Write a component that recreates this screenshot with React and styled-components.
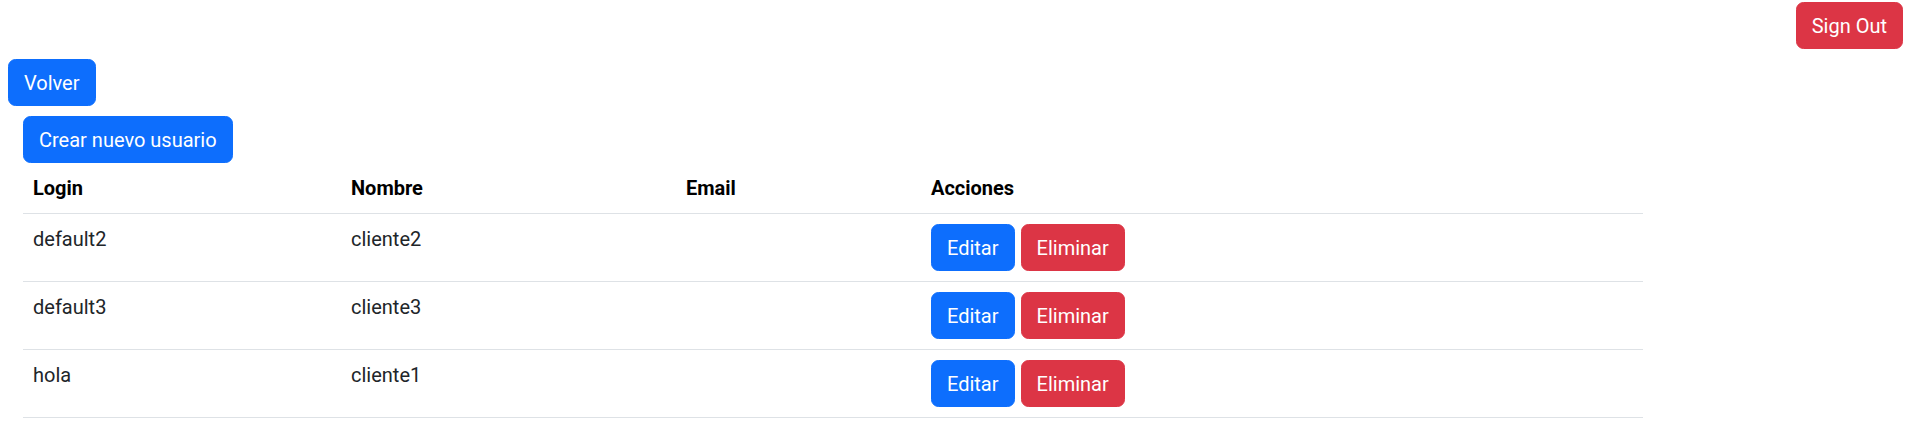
import React from 'react';
import styled, { createGlobalStyle } from 'styled-components';

const GlobalStyle = createGlobalStyle`
  body {
    margin: 0;
    background: #fff;
    font-family: Roboto, "Segoe UI", "Liberation Sans", sans-serif;
    font-size: 20px;
    line-height: 1.5;
    color: #212529;
  }
`;

const Page = styled.div`
  display: flex;
  flex-direction: column;
  align-items: flex-start;
`;

const TopBar = styled.header`
  align-self: stretch;
  display: flex;
  justify-content: flex-end;
  padding: 2px 8px 0;
`;

const Button = styled.button`
  font-family: inherit;
  font-size: 20px;
  line-height: 30px;
  font-weight: 400;
  padding: 7.5px 15px;
  border: 1px solid ${p => (p.$variant === 'danger' ? '#dc3545' : '#0d6efd')};
  border-radius: 7.5px;
  background: ${p => (p.$variant === 'danger' ? '#dc3545' : '#0d6efd')};
  color: #fff;
  cursor: pointer;
  white-space: nowrap;
`;

const BackButton = styled(Button)`
  margin: 10px 0 0 8px;
`;

const Section = styled.section`
  padding: 10px 0 0 23px;
`;

const Table = styled.table`
  width: 1620px;
  border-collapse: collapse;
  vertical-align: top;
  color: #000;
`;

const Th = styled.th`
  box-sizing: border-box;
  width: ${p => p.$w || 'auto'};
  text-align: left;
  font-weight: 700;
  padding: 10px;
  border-bottom: 1px solid #dee2e6;
`;

const Td = styled.td`
  padding: 10px;
  border-bottom: 1px solid #dee2e6;
  vertical-align: top;
  color: #212529;
`;

const Actions = styled.div`
  display: flex;
  gap: 6px;
`;

const users = [
  { login: 'default2', nombre: 'cliente2', email: '' },
  { login: 'default3', nombre: 'cliente3', email: '' },
  { login: 'hola', nombre: 'cliente1', email: '' },
];

export default function App() {
  return (
    <>
      <GlobalStyle />
      <Page>
        <TopBar>
          <Button $variant="danger">Sign Out</Button>
        </TopBar>
        <BackButton>Volver</BackButton>
        <Section>
          <Button>Crear nuevo usuario</Button>
          <Table>
            <thead>
              <tr>
                <Th $w="318px">Login</Th>
                <Th $w="335px">Nombre</Th>
                <Th $w="245px">Email</Th>
                <Th>Acciones</Th>
              </tr>
            </thead>
            <tbody>
              {users.map(u => (
                <tr key={u.login}>
                  <Td>{u.login}</Td>
                  <Td>{u.nombre}</Td>
                  <Td>{u.email}</Td>
                  <Td>
                    <Actions>
                      <Button>Editar</Button>
                      <Button $variant="danger">Eliminar</Button>
                    </Actions>
                  </Td>
                </tr>
              ))}
            </tbody>
          </Table>
        </Section>
      </Page>
    </>
  );
}
